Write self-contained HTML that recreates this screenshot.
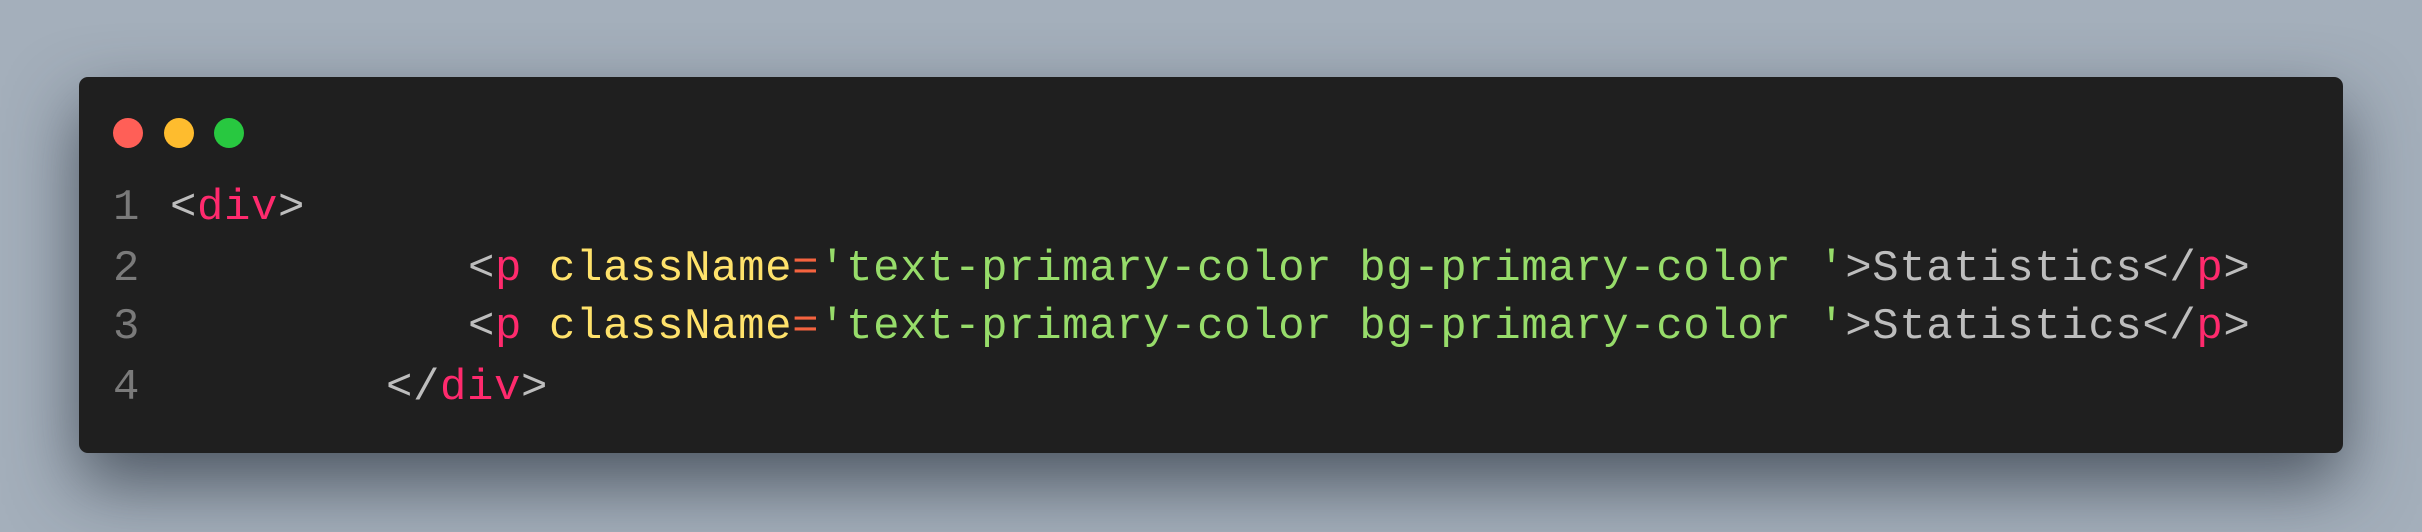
<!DOCTYPE html>
<html><head><style>
html,body{margin:0;padding:0;}
body{width:2422px;height:532px;background:#a4afbb;position:relative;overflow:hidden;font-family:"Liberation Mono",monospace;}
.card{position:absolute;left:79px;top:77px;width:2264px;height:376px;background:#1f1f1f;border-radius:9px;box-shadow:0 30px 70px rgba(40,48,60,0.7);}
.dot{position:absolute;top:118px;width:30px;height:30px;border-radius:50%;}
.ln{position:absolute;left:0;height:60px;line-height:60px;font-size:44px;letter-spacing:0.6px;white-space:pre;color:#bdbdbd;}
.n{position:absolute;left:113px;color:#7a7a7a;font-size:44px;line-height:60px;height:60px;}
.k{color:#ff2a6d}.a{color:#ffe26b}.o{color:#f5633f}.s{color:#97dc6a}
</style></head><body>
<div class="card"></div>
<div class="dot" style="left:113px;background:#ff5f57"></div>
<div class="dot" style="left:164px;background:#febc2e"></div>
<div class="dot" style="left:214px;background:#28c840"></div>

<div class="n" style="top:178px">1</div>
<div class="n" style="top:239px">2</div>
<div class="n" style="top:297px">3</div>
<div class="n" style="top:358px">4</div>

<div class="ln" style="top:178px;left:170px">&lt;<span class="k">div</span>&gt;</div>
<div class="ln" style="top:239px;left:468px">&lt;<span class="k">p</span> <span class="a">className</span><span class="o">=</span><span class="s">'text-primary-color bg-primary-color '</span>&gt;Statistics&lt;/<span class="k">p</span>&gt;</div>
<div class="ln" style="top:297px;left:468px">&lt;<span class="k">p</span> <span class="a">className</span><span class="o">=</span><span class="s">'text-primary-color bg-primary-color '</span>&gt;Statistics&lt;/<span class="k">p</span>&gt;</div>
<div class="ln" style="top:358px;left:386px">&lt;/<span class="k">div</span>&gt;</div>
</body></html>
